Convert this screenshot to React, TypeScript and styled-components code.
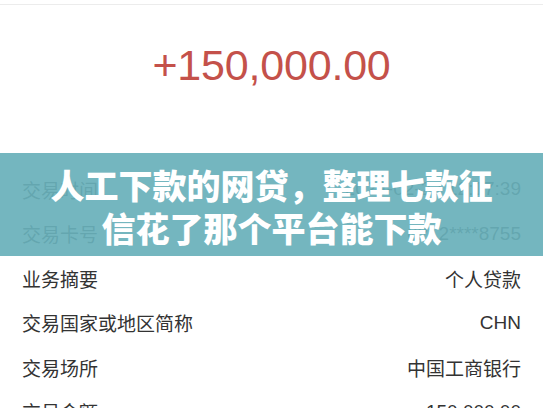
import styled, { createGlobalStyle } from "styled-components";

const GlobalStyle = createGlobalStyle`
  html, body {
    margin: 0;
    padding: 0;
    background: #ffffff;
  }
`;

const rows = [
  { label: "交易时间", value: "2024-02-22 12:17:39" },
  { label: "交易卡号", value: "6212****8755" },
  { label: "业务摘要", value: "个人贷款" },
  { label: "交易国家或地区简称", value: "CHN" },
  { label: "交易场所", value: "中国工商银行" },
  { label: "交易金额", value: "150,000.00" },
];

export default function App() {
  return (
    <Page>
      <GlobalStyle />
      <Header>
        <Amount>+150,000.00</Amount>
      </Header>
      <DetailList>
        {rows.map((row) => (
          <Row key={row.label}>
            <Label>{row.label}</Label>
            <Value>{row.value}</Value>
          </Row>
        ))}
      </DetailList>
      <Banner>
        <BannerLine>人工下款的网贷，整理七款征</BannerLine>
        <BannerLine>信花了那个平台能下款</BannerLine>
      </Banner>
    </Page>
  );
}

const Page = styled.div`
  position: relative;
  width: 543px;
  height: 408px;
  overflow: hidden;
  background: #ffffff;
`;

const Header = styled.div`
  margin-top: 4px;
  height: 163px;
  border-top: 1px solid #ececec;
  display: flex;
  justify-content: center;
  padding-top: 35px;
  box-sizing: border-box;
`;

const Amount = styled.div`
  font-family: "Liberation Sans", Arial, sans-serif;
  font-size: 43px;
  line-height: 50px;
  letter-spacing: -0.2px;
  color: #c4514a;
`;

const DetailList = styled.div`
  display: flex;
  flex-direction: column;
  padding: 0 22px;
`;

const Row = styled.div`
  height: 44.5px;
  display: flex;
  align-items: center;
  justify-content: space-between;
  font-size: 19px;
  color: #333333;
`;

const Label = styled.span`
  font-family: "Noto Sans CJK SC", sans-serif;
`;

const Value = styled.span`
  font-family: "Liberation Sans", "Noto Sans CJK SC", sans-serif;
`;

const Banner = styled.div`
  position: absolute;
  left: 0;
  right: 0;
  top: 153px;
  height: 103px;
  padding-top: 10px;
  box-sizing: border-box;
  background: rgba(104, 176, 186, 0.92);
  display: flex;
  flex-direction: column;
  align-items: center;
`;

const BannerLine = styled.div`
  font-family: "Noto Sans CJK SC", sans-serif;
  font-weight: 900;
  font-size: 34px;
  line-height: 43px;
  color: #ffffff;
  white-space: nowrap;
`;
